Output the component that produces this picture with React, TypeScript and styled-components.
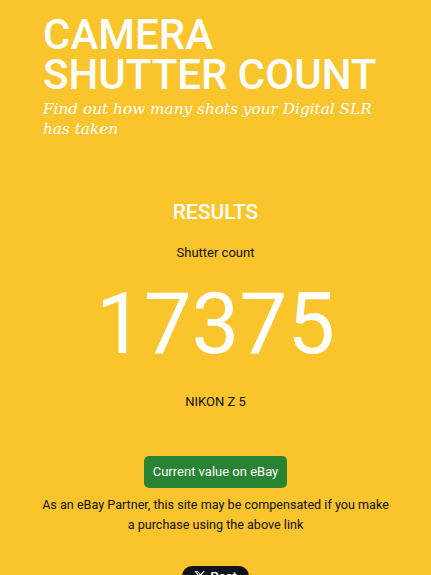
import React from "react";
import styled, { createGlobalStyle } from "styled-components";

const GlobalStyle = createGlobalStyle`
  html, body {
    margin: 0;
    padding: 0;
    background-color: #fac42c;
  }
  body {
    font-family: Roboto, "Liberation Sans", sans-serif;
  }
`;

const Page = styled.div`
  background-color: #fac42c;
  min-height: 575px;
  padding: 15px 0 0;
  box-sizing: border-box;
`;

const Header = styled.header`
  padding: 0 43px;
`;

const Title = styled.h1`
  margin: 0;
  font-family: Roboto, sans-serif;
  font-weight: 500;
  font-size: 42px;
  line-height: 40px;
  color: #ffffff;
`;

const Tagline = styled.p`
  margin: 4px 0 0;
  font-family: "DejaVu Serif", "Liberation Serif", serif;
  font-style: italic;
  font-size: 15.3px;
  line-height: 20px;
  color: #ffffff;
`;

const Results = styled.section`
  display: flex;
  flex-direction: column;
  align-items: center;
  text-align: center;
  padding: 61px 30px 0;
`;

const SectionTitle = styled.h2`
  margin: 0;
  font-weight: 500;
  font-size: 21px;
  line-height: 24px;
  color: #ffffff;
`;

const Label = styled.div`
  margin-top: 20px;
  font-size: 13px;
  line-height: 18px;
  color: #111111;
`;

const Count = styled.div`
  margin-top: 14px;
  font-size: 85px;
  line-height: 96px;
  font-weight: 400;
  color: #ffffff;
`;

const Model = styled.div`
  margin-top: 21px;
  font-size: 13px;
  line-height: 18px;
  color: #111111;
`;

const EbayButton = styled.a`
  margin-top: 45px;
  display: inline-block;
  background-color: #2a8332;
  color: #ffffff;
  font-size: 13px;
  line-height: 32px;
  padding: 0 9px;
  border-radius: 5px;
  text-decoration: none;
`;

const Disclaimer = styled.p`
  margin: 7px 0 0;
  max-width: 350px;
  font-size: 12.6px;
  line-height: 20px;
  color: #111111;
`;

const ShareButton = styled.div`
  margin-top: 31px;
  display: inline-flex;
  align-items: center;
  gap: 4px;
  background-color: #0f1419;
  color: #ffffff;
  font-size: 13px;
  font-weight: 500;
  height: 20px;
  padding: 0 12px;
  border-radius: 10px;
`;

export default function App() {
  return (
    <Page>
      <GlobalStyle />
      <Header>
        <Title>
          CAMERA
          <br />
          SHUTTER COUNT
        </Title>
        <Tagline>Find out how many shots your Digital SLR has taken</Tagline>
      </Header>
      <Results>
        <SectionTitle>RESULTS</SectionTitle>
        <Label>Shutter count</Label>
        <Count>17375</Count>
        <Model>NIKON Z 5</Model>
        <EbayButton href="#">Current value on eBay</EbayButton>
        <Disclaimer>
          As an eBay Partner, this site may be compensated if you make a
          purchase using the above link
        </Disclaimer>
        <ShareButton>
          <svg width="12" height="12" viewBox="0 0 24 24" fill="#fff">
            <path d="M18.2 2.25h3.31l-7.23 8.26 8.5 11.24h-6.66l-5.21-6.82-5.97 6.82H1.63l7.73-8.84L1.2 2.25h6.83l4.71 6.23zm-1.16 17.52h1.83L7.08 4.13H5.12z" />
          </svg>
          Post
        </ShareButton>
      </Results>
    </Page>
  );
}
